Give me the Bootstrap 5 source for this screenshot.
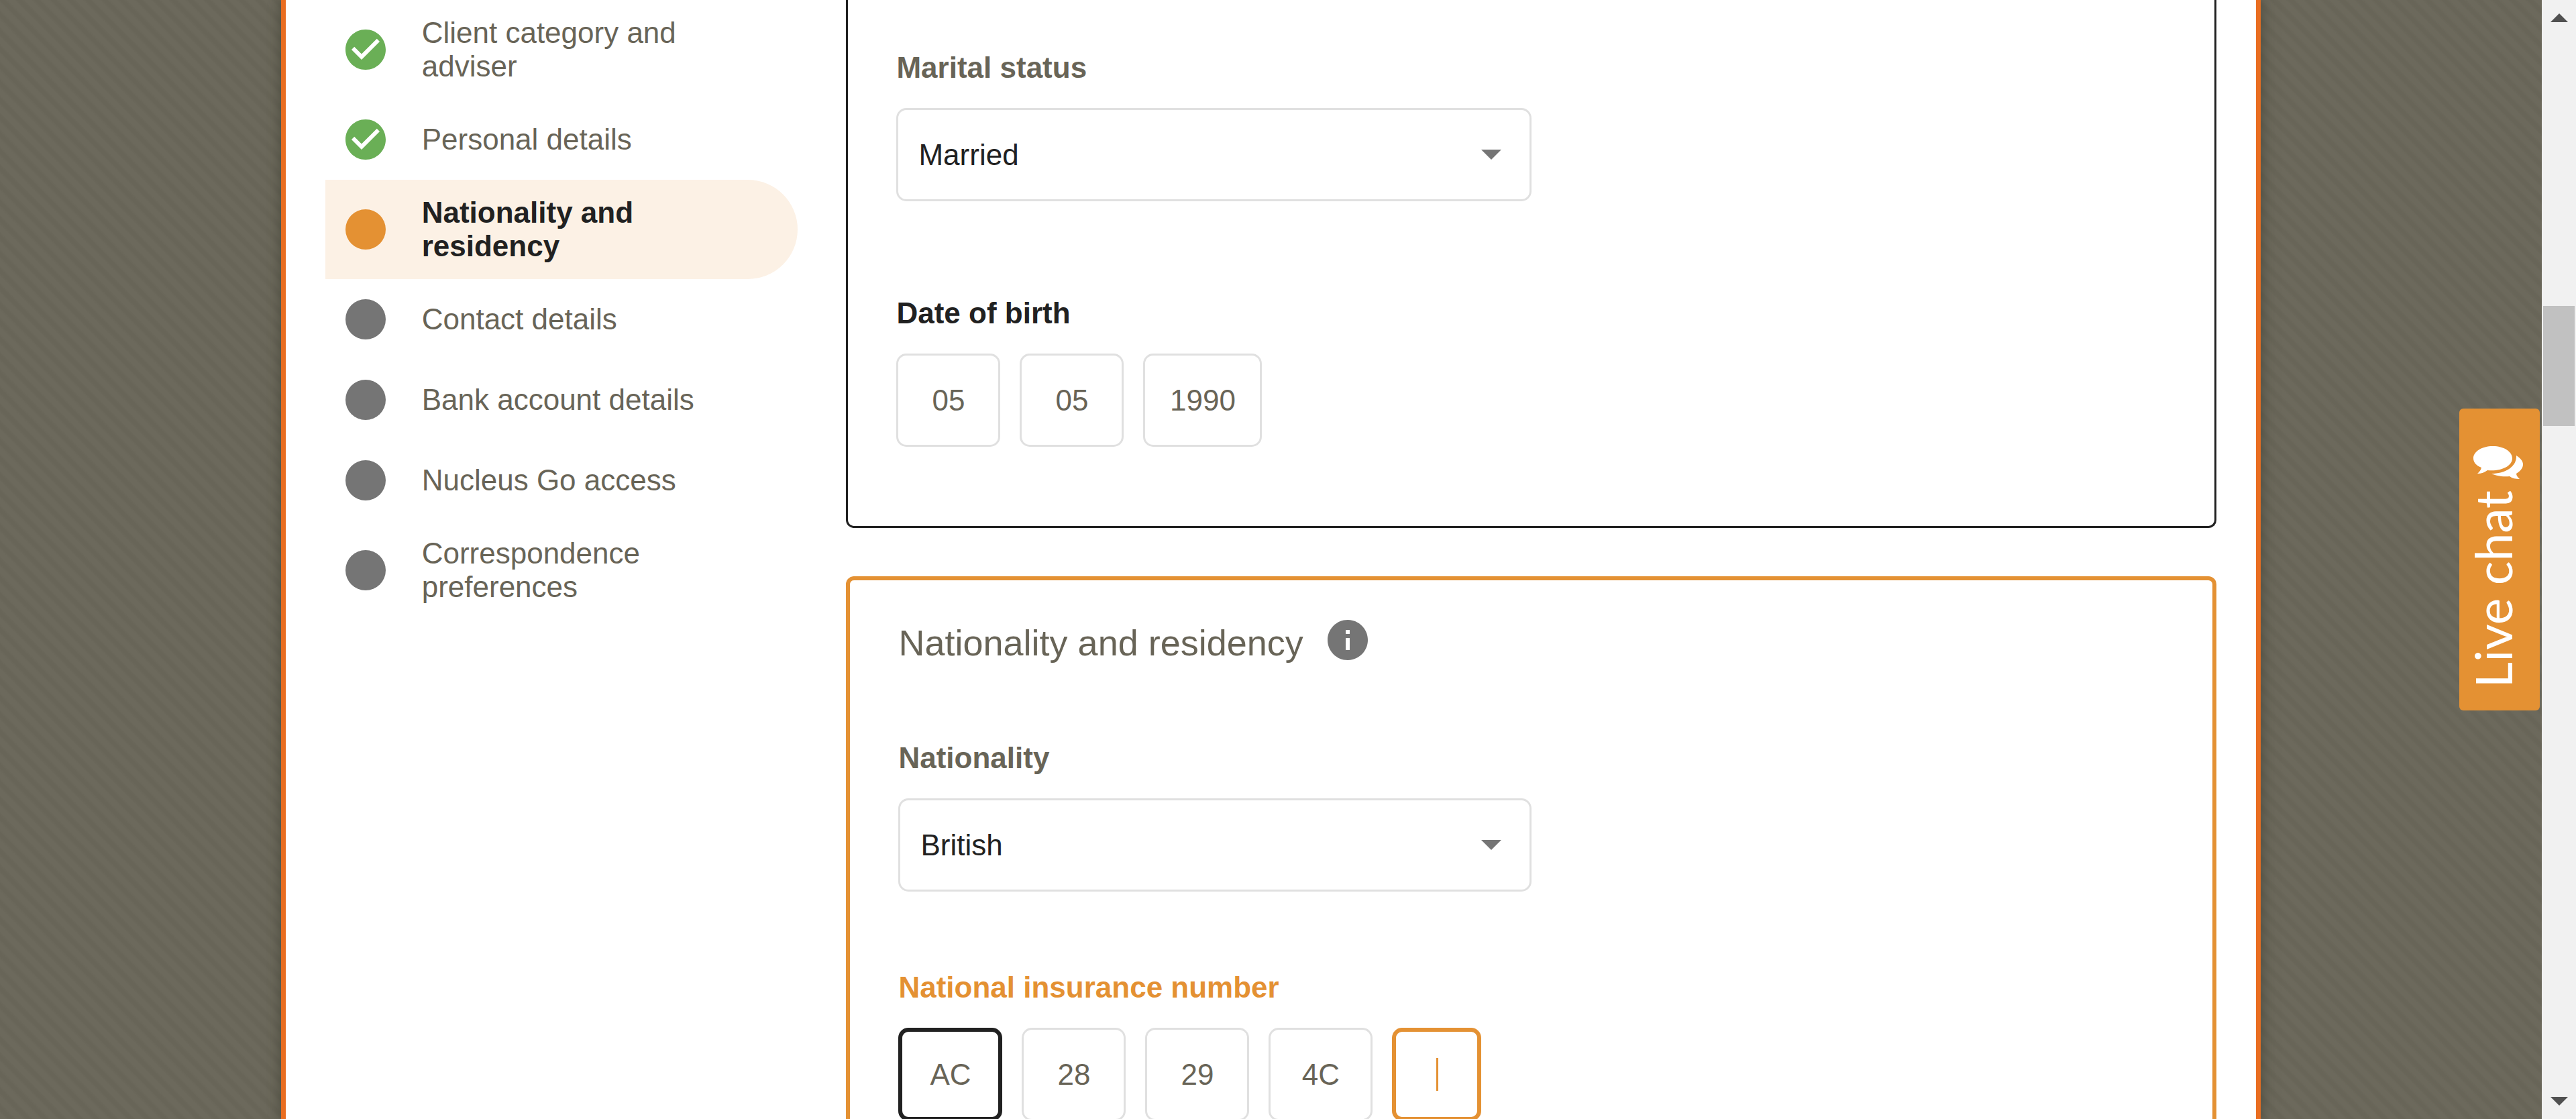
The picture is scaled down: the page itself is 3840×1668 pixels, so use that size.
<!DOCTYPE html>
<html lang="en">
<head>
<meta charset="utf-8">
<meta name="viewport" content="width=device-width, initial-scale=1">
<title>Nationality and residency</title>
<link href="https://cdn.jsdelivr.net/npm/bootstrap@5.3.0/dist/css/bootstrap.min.css" rel="stylesheet">
<style>
  :root { --accent: #e49133; --ink: #212121; --olive: #686457; --mid: #757575; --line: #e0e0e0; }
  body { font-family: "Liberation Sans", Arial, sans-serif; font-size: 44px; line-height: 50px; color: var(--olive); }
  .backdrop {
    background-color: #69665a;
    background-image: repeating-linear-gradient(45deg, #6c695c 0, #6c695c 6px, #686558 10px, #686558 14px, #6c695c 18px);
  }
  .panel { width: 77.9%; border: solid #e96d20; border-width: 0 7px; box-shadow: 0 0 20px 1px rgba(44, 46, 34, .5); }
  .steps-col { width: 26%; padding-left: 59px; }
  .form-col { padding: 0 59px 0 72px; }
  .step { min-height: 120px; padding: 24px 74px 24px 24px; gap: 48px; color: var(--olive); text-decoration: none; }
  .step svg { width: 72px; height: 72px; margin: -11px 0; }
  .step.current { background: #fcf1e5; color: var(--ink); font-weight: 700; border-radius: 0 74px 74px 0; }
  .section-box { border-radius: 12px; padding: 0 72px; }
  .section-done { border: 3px solid var(--ink); border-top: 0; border-radius: 0 0 12px 12px; padding-top: 76px; padding-bottom: 118px; }
  .section-active { border: 6px solid var(--accent); margin-top: 72px; padding-top: 59px; padding-bottom: 118px; }
  .section-title { font-size: 54px; line-height: 68px; gap: 36px; margin: 0 0 113px; font-weight: 400; }
  .section-title svg { width: 72px; height: 72px; margin: -6px; }
  .field-label { display: block; font-weight: 700; margin: 0 0 35px; line-height: 50px; }
  legend.field-label { float: none; font-size: 44px; }
  .label-filled { color: var(--ink); }
  .label-active { color: var(--accent); }
  .dob { margin-top: 142px; }
  .nino { margin-top: 118px; }
  .form-select.pick, .form-control.cell {
    height: 139px; border: 3px solid var(--line); border-radius: 15px; font-size: 44px; line-height: 50px;
    box-shadow: none; background-color: #fff;
  }
  .form-select.pick {
    color: var(--ink); padding: 0 90px 0 30px;
    background-image: url("data:image/svg+xml,%3Csvg xmlns='http://www.w3.org/2000/svg' viewBox='0 0 30 15'%3E%3Cpath fill='%23757575' d='M0 0h30L15 15z'/%3E%3C/svg%3E");
    background-size: 30px 15px; background-position: right 42px center;
  }
  .cells { gap: 29px; }
  .form-control.cell { width: 155px; padding: 0; text-align: center; color: var(--olive); }
  .form-control.cell-year { width: 177px; }
  .form-control.cell-last { width: 133px; border: 6px solid var(--accent); }
  .form-control.cell-first { border: 6px solid var(--ink); }
  .caret-line { position: absolute; left: 50%; top: 50%; width: 3px; height: 49px; margin: -25px 0 0 -1px; background: var(--accent); }
  .chat-tab {
    position: absolute; right: 3px; top: 609px; width: 120px; height: 450px; border: 0; border-radius: 6px;
    background: var(--accent); color: #fff; padding: 56px 4px 34px 0; gap: 14px;
  }
  .chat-tab svg { width: 74px; height: 50px; }
  .chat-text { writing-mode: vertical-rl; transform: rotate(180deg); font-family: Lato, sans-serif; font-size: 75px; line-height: 84px; padding-left: 16px; white-space: nowrap; }
  .scroll-rail { width: 51px; background: #f1f1f1; padding: 20px 2px; }
  .scroll-rail svg { width: 26px; height: 13px; }
  .scroll-thumb { width: 47px; height: 179px; background: #c1c1c1; margin-top: 423px; }
</style>
</head>
<body>
<svg class="d-none" aria-hidden="true">
  <symbol id="tick" viewBox="0 0 24 24"><path fill="#6aaf56" d="M12 2C6.48 2 2 6.48 2 12s4.48 10 10 10 10-4.48 10-10S17.52 2 12 2zm-2 15l-5-5 1.41-1.41L10 14.17l7.59-7.59L19 8l-9 9z"/></symbol>
  <symbol id="dot" viewBox="0 0 24 24"><circle cx="12" cy="12" r="10" fill="#757575"/></symbol>
  <symbol id="dot-current" viewBox="0 0 24 24"><circle cx="12" cy="12" r="10" fill="#e49133"/></symbol>
</svg>
<div class="d-flex vh-100 overflow-hidden">
  <div class="backdrop position-relative flex-grow-1 d-flex justify-content-center overflow-hidden">
    <main class="panel bg-white d-flex">
      <nav class="steps-col flex-shrink-0 d-flex flex-column" aria-label="Application steps">
        <a class="step d-flex align-items-center" href="#"><svg class="flex-shrink-0"><use href="#tick"/></svg><span>Client category and adviser</span></a>
        <a class="step d-flex align-items-center" href="#"><svg class="flex-shrink-0"><use href="#tick"/></svg><span>Personal details</span></a>
        <a class="step current d-flex align-items-center" href="#" aria-current="step"><svg class="flex-shrink-0"><use href="#dot-current"/></svg><span>Nationality and residency</span></a>
        <a class="step d-flex align-items-center" href="#"><svg class="flex-shrink-0"><use href="#dot"/></svg><span>Contact details</span></a>
        <a class="step d-flex align-items-center" href="#"><svg class="flex-shrink-0"><use href="#dot"/></svg><span>Bank account details</span></a>
        <a class="step d-flex align-items-center" href="#"><svg class="flex-shrink-0"><use href="#dot"/></svg><span>Nucleus Go access</span></a>
        <a class="step d-flex align-items-center" href="#"><svg class="flex-shrink-0"><use href="#dot"/></svg><span>Correspondence preferences</span></a>
      </nav>
      <form class="form-col flex-grow-1">
        <section class="section-box section-done">
          <div class="w-50">
            <label class="field-label" for="marital">Marital status</label>
            <select class="form-select pick" id="marital"><option>Married</option></select>
          </div>
          <fieldset class="dob">
            <legend class="field-label label-filled">Date of birth</legend>
            <div class="cells d-flex">
              <input class="form-control cell" aria-label="Day" value="05">
              <input class="form-control cell" aria-label="Month" value="05">
              <input class="form-control cell cell-year" aria-label="Year" value="1990">
            </div>
          </fieldset>
        </section>
        <section class="section-box section-active">
          <h2 class="section-title d-flex align-items-start"><span>Nationality and residency</span>
            <svg viewBox="0 0 24 24" role="img" aria-label="Information"><path fill="#757575" d="M12 2C6.48 2 2 6.48 2 12s4.48 10 10 10 10-4.48 10-10S17.52 2 12 2zm1 15h-2v-6h2v6zm0-8h-2V7h2v2z"/></svg></h2>
          <div class="w-50">
            <label class="field-label" for="nation">Nationality</label>
            <select class="form-select pick" id="nation"><option>British</option></select>
          </div>
          <fieldset class="nino">
            <legend class="field-label label-active">National insurance number</legend>
            <div class="cells d-flex">
              <input class="form-control cell cell-first" aria-label="Part 1" value="AC">
              <input class="form-control cell" aria-label="Part 2" value="28">
              <input class="form-control cell" aria-label="Part 3" value="29">
              <input class="form-control cell" aria-label="Part 4" value="4C">
              <div class="position-relative"><input class="form-control cell cell-last" aria-label="Part 5"><span class="caret-line"></span></div>
            </div>
          </fieldset>
        </section>
      </form>
    </main>
    <button type="button" class="chat-tab d-flex flex-column align-items-center justify-content-between">
      <svg viewBox="0 0 74 50" aria-hidden="true" fill="#fff"><path d="M29 0C13 0 0 8 0 18c0 6 4 11 12 14-1 4-3 6-6 9 6 0 11-2 15-5 20 2 37-6 37-18C58 8 45 0 29 0z"/><path d="M64 14c6 4 10 8 10 13 0 6-4 10-10 14 0 3 2 5 5 8-6 0-11-1-15-4-12 1-20-1-27-4 20 0 38-10 37-27z"/></svg>
      <span class="chat-text">Live chat</span>
    </button>
  </div>
  <div class="scroll-rail flex-shrink-0 d-flex flex-column align-items-center" aria-hidden="true">
    <svg viewBox="0 0 26 13" fill="#505050"><path d="M0 13L13 0l13 13z"/></svg>
    <div class="scroll-thumb"></div>
    <svg class="mt-auto" viewBox="0 0 26 13" fill="#505050"><path d="M0 0h26L13 13z"/></svg>
  </div>
</div>
<script src="https://cdn.jsdelivr.net/npm/bootstrap@5.3.0/dist/js/bootstrap.bundle.min.js"></script>
</body>
</html>
